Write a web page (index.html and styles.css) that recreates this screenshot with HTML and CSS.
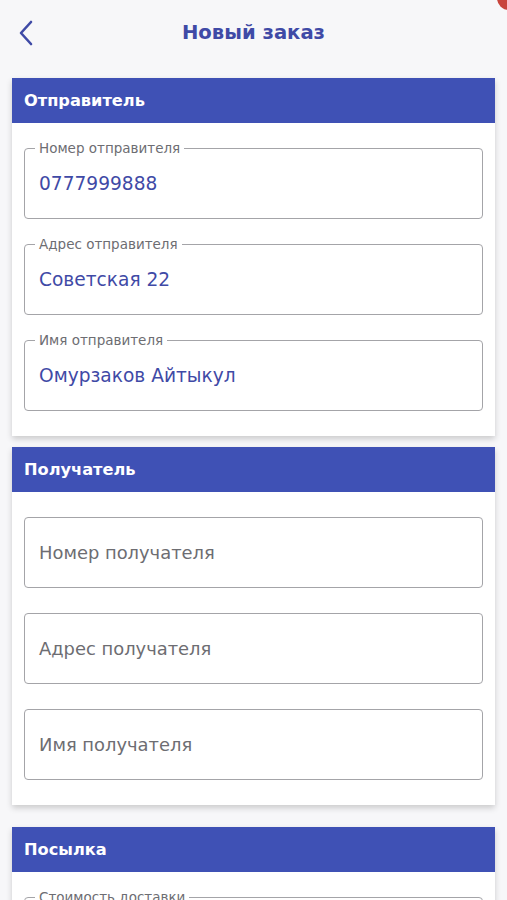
FILE: index.html
```html
<!DOCTYPE html>
<html lang="ru">

<head>
    <meta charset="UTF-8">
    <meta name="viewport" content="width=device-width, initial-scale=1.0">
    <title>Новый заказ</title>
    <link rel="stylesheet" href="styles.css">
</head>

<body>
    <div class="corner"></div>

    <div class="topbar">
        <button class="back" aria-label="Назад">
            <svg width="16" height="26" viewBox="0 0 16 26">
                <path d="M13 2 L3 13 L13 24" fill="none" stroke="#3f4aa6" stroke-width="2.6" stroke-linecap="round" stroke-linejoin="round"/>
            </svg>
        </button>
        <h1 class="title">Новый заказ</h1>
    </div>

    <div class="card">
        <div class="card-head">Отправитель</div>
        <div class="card-body">
            <div class="field">
                <span class="label">Номер отправителя</span>
                <span class="value">0777999888</span>
            </div>
            <div class="field">
                <span class="label">Адрес отправителя</span>
                <span class="value">Советская 22</span>
            </div>
            <div class="field">
                <span class="label">Имя отправителя</span>
                <span class="value">Омурзаков Айтыкул</span>
            </div>
        </div>
    </div>

    <div class="card card-wide">
        <div class="card-head">Получатель</div>
        <div class="card-body">
            <div class="field">
                <span class="placeholder">Номер получателя</span>
            </div>
            <div class="field">
                <span class="placeholder">Адрес получателя</span>
            </div>
            <div class="field">
                <span class="placeholder">Имя получателя</span>
            </div>
        </div>
    </div>

    <div class="card">
        <div class="card-head">Посылка</div>
        <div class="card-body">
            <div class="field">
                <span class="label">Стоимость доставки</span>
                <span class="value"></span>
            </div>
        </div>
    </div>
</body>

</html>
```

FILE: styles.css
```css
body {
    font-family: "DejaVu Sans", Roboto, sans-serif;
    background-color: #f7f7f9;
    margin: 0;
    padding: 0;
    overflow: hidden;
}

.corner {
    position: absolute;
    top: -14px;
    right: -14px;
    width: 24px;
    height: 24px;
    border-radius: 50%;
    background: #c8443c;
}

.topbar {
    height: 78px;
    display: flex;
    justify-content: center;
    position: relative;
}

.back {
    position: absolute;
    left: 18px;
    top: 20px;
    background: none;
    border: none;
    padding: 0;
    cursor: pointer;
}

.title {
    margin: 19px 0 0;
    font-size: 19.6px;
    line-height: 28px;
    font-weight: 700;
    color: #3f4aa6;
}

.card {
    margin: 0 12px 11px;
    background: white;
    box-shadow: 0 3px 6px rgba(0, 0, 0, 0.18);
}

.card-wide {
    margin-bottom: 22px;
}

.card-head {
    background-color: #3f51b5;
    color: white;
    font-size: 16.2px;
    font-weight: 700;
    height: 45px;
    line-height: 45px;
    padding-left: 12px;
}

.card-body {
    padding: 25px 12px;
    display: flex;
    flex-direction: column;
    gap: 25px;
}

.field {
    position: relative;
    height: 69px;
    border: 1px solid #a4a4a8;
    border-radius: 4px;
    display: flex;
    align-items: center;
    padding: 0 14px;
}

.label {
    position: absolute;
    top: -10px;
    left: 10px;
    padding: 0 4px;
    background: white;
    font-size: 13.5px;
    color: #6d6d72;
    line-height: 18px;
}

.value {
    font-size: 18.6px;
    color: #3f4aa6;
}

.placeholder {
    font-size: 17.9px;
    color: #6d6d72;
}
```
